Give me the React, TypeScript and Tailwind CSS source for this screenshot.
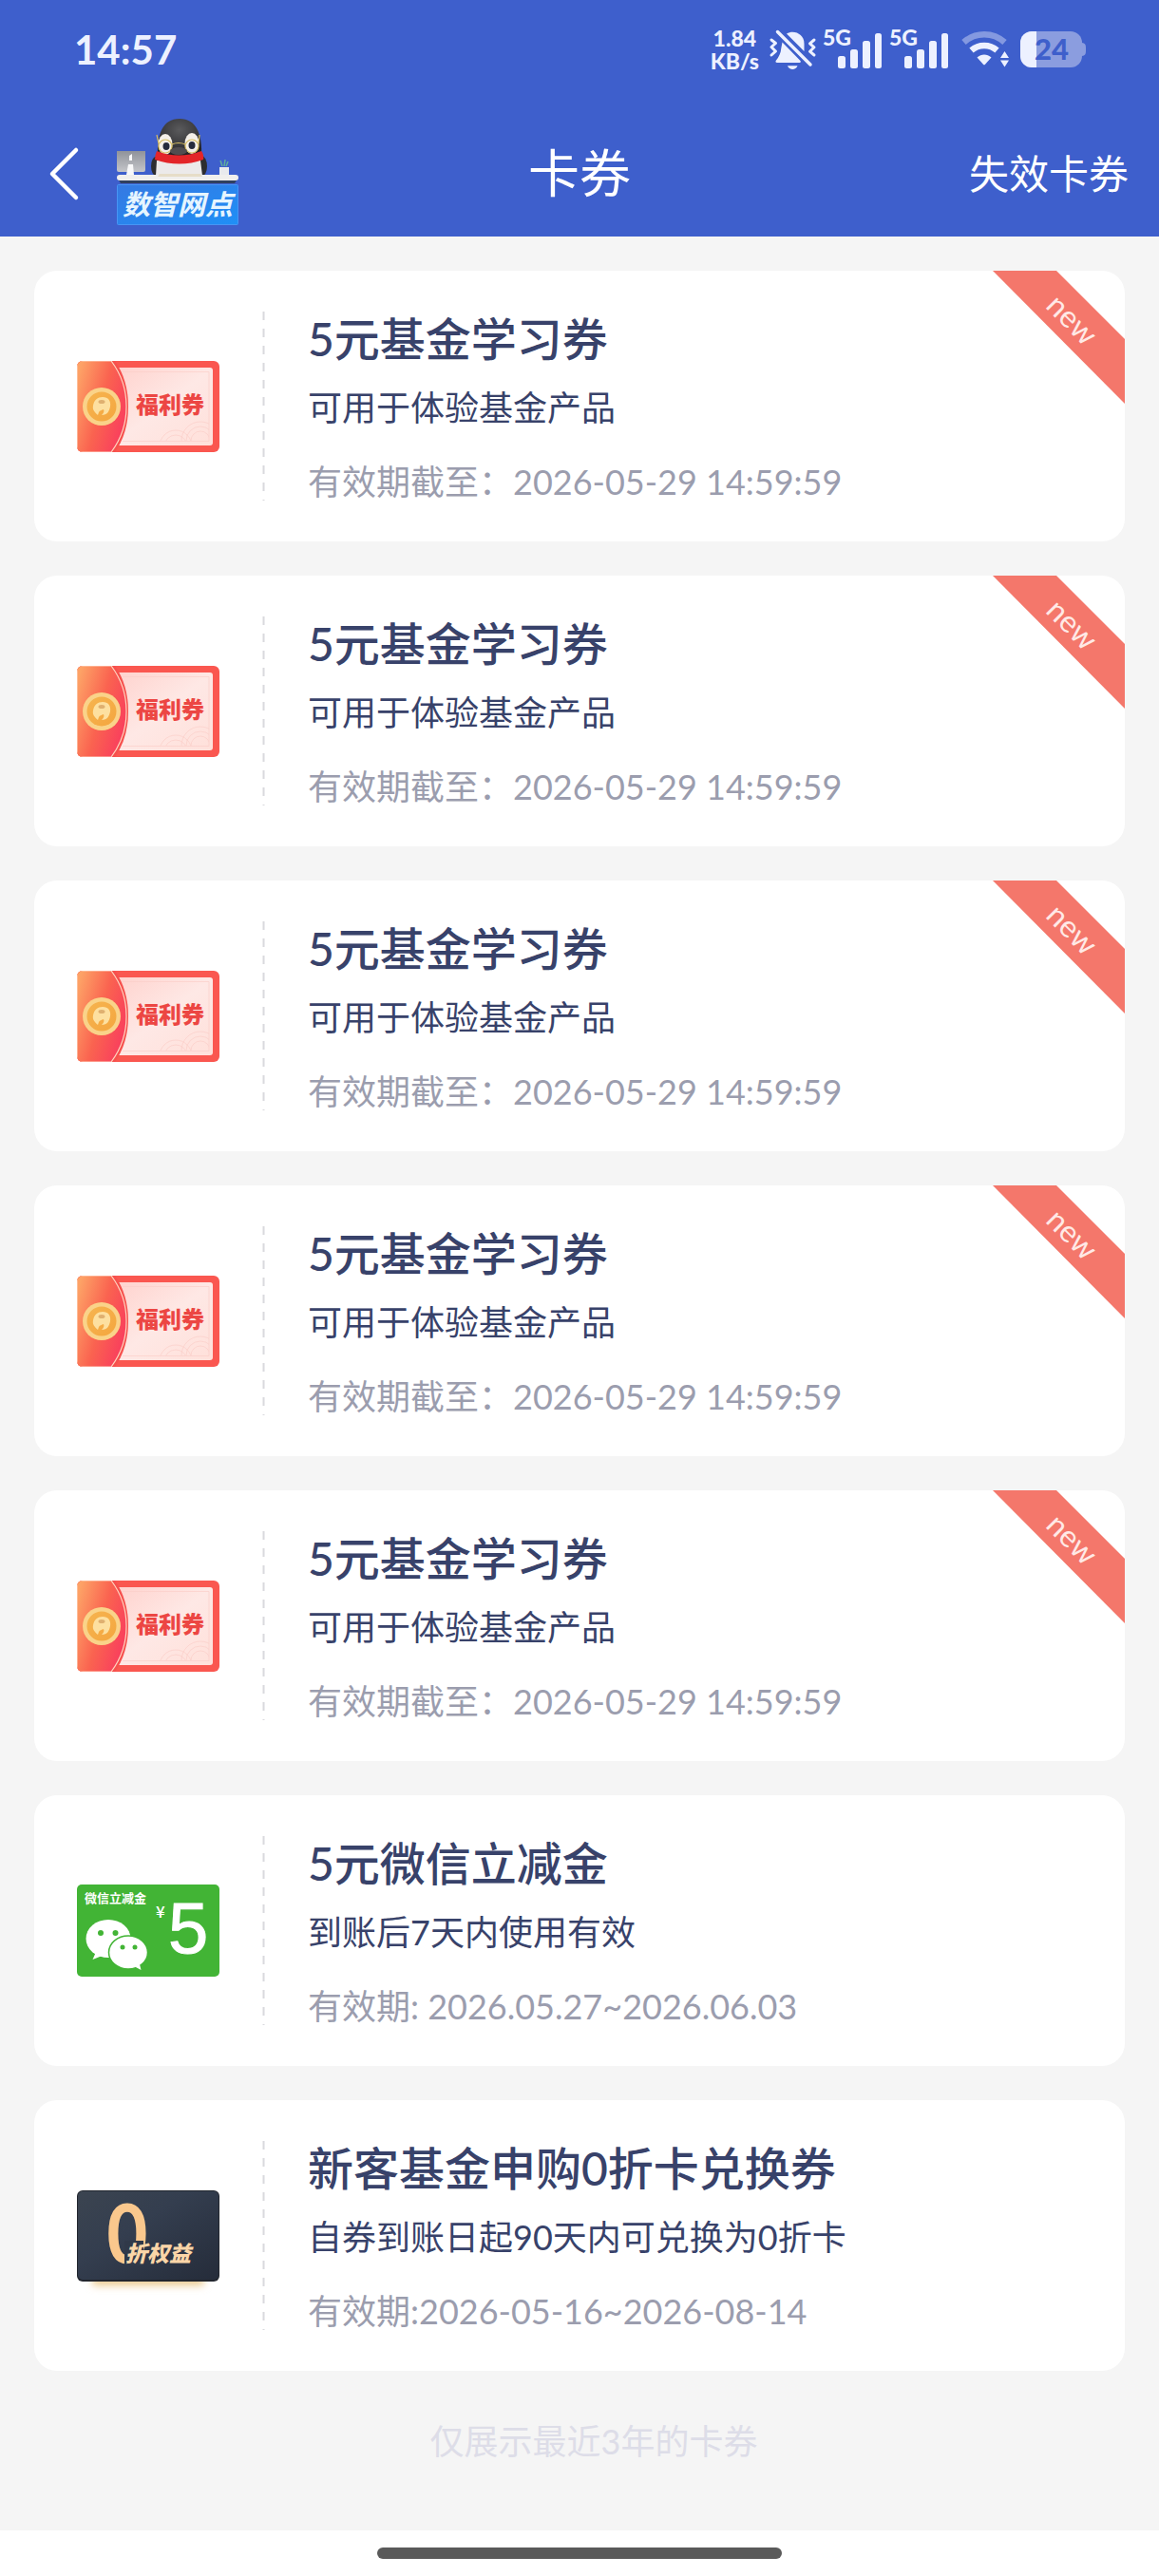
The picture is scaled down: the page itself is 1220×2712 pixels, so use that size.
type CouponKind = "welfare" | "wechat" | "zero";

interface Coupon {
  id: number;
  kind: CouponKind;
  title: string;
  description: string;
  validity: string;
  isNew?: boolean;
}

const fundCoupons: Coupon[] = [1, 2, 3, 4, 5].map((id) => ({
  id,
  kind: "welfare",
  title: "5元基金学习券",
  description: "可用于体验基金产品",
  validity: "有效期截至：2026-05-29 14:59:59",
  isNew: true,
}));

const coupons: Coupon[] = [
  ...fundCoupons,
  {
    id: 6,
    kind: "wechat",
    title: "5元微信立减金",
    description: "到账后7天内使用有效",
    validity: "有效期: 2026.05.27~2026.06.03",
  },
  {
    id: 7,
    kind: "zero",
    title: "新客基金申购0折卡兑换券",
    description: "自券到账日起90天内可兑换为0折卡",
    validity: "有效期:2026-05-16~2026-08-14",
  },
];

function MutedBellIcon() {
  return (
    <svg width="50" height="44" viewBox="0 0 50 44" fill="none" className="overflow-visible" aria-hidden="true">
      <path d="M20 5.5C28 1 38.500 6 38.500 16v8z" fill="currentColor" />
      <path d="M15.500 14.500 34.500 34c.8.900.3 2-.8 2H10c-1.500 0-2-1.300-1.200-2.300 3-3.500 5.200-8 5.500-13z" fill="currentColor" />
      <path d="M21 39.200h10.500c-1 2.600-3 3.800-5.200 3.800s-4.300-1.200-5.300-3.800z" fill="currentColor" />
      <path d="m10.500 3.500 34.500 34.500" stroke="currentColor" strokeWidth="3.500" strokeLinecap="round" />
      <path
        d="m4 12 4.500 3.500L4 19.500 8.500 24 4 28M49 12l-4.500 3.800 4.500 4-4.500 4.400L49 28"
        stroke="currentColor"
        strokeWidth="3"
        strokeLinejoin="round"
        strokeLinecap="round"
      />
    </svg>
  );
}

function SignalIcon() {
  return (
    <svg width="61" height="42" viewBox="0 0 61 42" fill="currentColor" className="overflow-visible" aria-hidden="true">
      <text x="-1" y="17" className="font-['Lato',sans-serif] text-[23px] font-black">
        5G
      </text>
      <rect x="15" y="28" width="8" height="13" rx="2.500" />
      <rect x="28" y="21" width="8" height="20" rx="2.500" />
      <rect x="41" y="12" width="8" height="29" rx="2.500" />
      <rect x="54" y="4" width="7" height="37" rx="2.500" />
    </svg>
  );
}

function WifiIcon() {
  return (
    <svg width="58" height="40" viewBox="0 0 58 40" fill="none" aria-hidden="true">
      <path d="M7.500 12.500a32 32 0 0 1 43 0" stroke="currentColor" strokeOpacity=".4" strokeWidth="6.500" />
      <path d="M15.500 21a20.500 20.500 0 0 1 27 0" stroke="currentColor" strokeWidth="6.500" />
      <path d="M21.500 28.500c4.500-4 10.500-4 15 0L30 35.700a1.400 1.400 0 0 1-2 0z" fill="currentColor" />
      <path d="M50.500 22 55 29h-9zM50.500 38.500 46 31.500h9z" fill="currentColor" />
    </svg>
  );
}

function BatteryIcon() {
  return (
    <svg width="69" height="38" viewBox="0 0 69 38" className="overflow-visible" aria-hidden="true">
      <defs>
        <clipPath id="battery-body">
          <rect width="65" height="38" rx="12" />
        </clipPath>
      </defs>
      <g clipPath="url(#battery-body)">
        <rect width="65" height="38" fill="#8b9ddf" />
        <rect width="17" height="38" fill="#edf1ff" />
      </g>
      <path d="M65 12c3 .500 4 2 4 5v4c0 3-1 4.500-4 5z" fill="#8b9ddf" />
      <text x="15" y="30" fill="#3e5fcb" className="font-['Lato',sans-serif] text-[31px] font-black">
        24
      </text>
    </svg>
  );
}

function StatusBar() {
  return (
    <div className="flex h-[104px] items-center justify-between pl-[78px] pr-[77px] font-['Lato',sans-serif] font-bold text-[#edf1ff]">
      <span className="text-[42px] leading-none">14:57</span>
      <div className="flex items-center gap-[9px]">
        <div className="text-center text-[23px] font-black leading-6">
          <div>1.84</div>
          <div>KB/s</div>
        </div>
        <MutedBellIcon />
        <SignalIcon />
        <SignalIcon />
        <WifiIcon />
        <BatteryIcon />
      </div>
    </div>
  );
}

function BranchLogo() {
  return (
    <svg width="130" height="118" viewBox="0 0 130 118" role="img" aria-label="数智网点">
      <defs>
        <radialGradient id="penguin-head" cx=".5" cy=".3" r=".7">
          <stop offset="0" stopColor="#5a5a5c" />
          <stop offset="1" stopColor="#242427" />
        </radialGradient>
        <linearGradient id="logo-screen" x1="0" y1="0" x2="0" y2="1">
          <stop offset="0" stopColor="#90939a" />
          <stop offset="1" stopColor="#c4c5c9" />
        </linearGradient>
        <linearGradient id="logo-sign" x1="0" y1="0" x2="1" y2="1">
          <stop offset="0" stopColor="#3579e2" />
          <stop offset="1" stopColor="#1f8ff6" />
        </linearGradient>
      </defs>
      <ellipse cx="42" cy="51" rx="5" ry="10" fill="#2d2d30" />
      <ellipse cx="90" cy="51" rx="6" ry="11" fill="#2d2d30" />
      <path d="M43 45h46l2 16H42z" fill="#eceaea" />
      <path d="M44 40C43 18 49 1 67 1s24 17 23 39z" fill="url(#penguin-head)" />
      <ellipse cx="52" cy="28" rx="7.500" ry="11" fill="#f4efe8" />
      <ellipse cx="80" cy="27" rx="7.500" ry="11" fill="#f4efe8" />
      <ellipse cx="53" cy="30" rx="3.500" ry="4" fill="#252b3d" />
      <ellipse cx="80" cy="29" rx="3.500" ry="4" fill="#252b3d" />
      <g fill="none" stroke="#d6bd62" strokeWidth="1.200">
        <circle cx="52" cy="30" r="7" />
        <circle cx="80" cy="30" r="7" />
        <path d="M59 28q7-3 14 0M45 27l-2-9M87 27l1-9" />
      </g>
      <ellipse cx="66" cy="35" rx="9" ry="4" fill="#514d50" />
      <path d="M43 35q23 9 47 0 3 4 2 9-25 9-51 0 0-5 2-9z" fill="#e32529" />
      <path d="M1 35h30v20q0 2-2 2H3q-2 0-2-2z" fill="url(#logo-screen)" />
      <path d="M13 49h5l1 11h-8zM14 40l3-2v7h-3z" fill="#f8f8f9" />
      <path d="m112 51-2-6M114 51l1-7M116 51l2-5" stroke="#5fae9d" strokeWidth="1.500" />
      <path d="M109 52h10v8h-10z" fill="#e9eaed" />
      <path d="M2 64h126l-3 5H5z" fill="#30405f" />
      <rect x="1" y="60" width="128" height="6" rx="3" fill="#f0efed" />
      <path d="M46 59h43l2 3H44z" fill="#e6ddc8" />
      <rect x="1.500" y="70.500" width="127" height="42" rx="1" fill="url(#logo-sign)" stroke="#4795f4" />
      <text
        x="65"
        y="102"
        textAnchor="middle"
        fill="#e6f5ff"
        className="font-['Noto_Sans_CJK_SC',sans-serif] text-[29px] font-bold italic"
      >
        数智网点
      </text>
    </svg>
  );
}

function Header() {
  return (
    <header className="bg-[#3e5fcc] text-white">
      <StatusBar />
      <nav className="grid h-[145px] grid-cols-3 items-center px-8 pt-3">
        <div className="flex items-center gap-9 pl-[18px]">
          <button type="button" aria-label="返回">
            <svg width="36" height="60" viewBox="0 0 36 60" fill="none" aria-hidden="true">
              <path d="M30 5 5 30l25 25" stroke="currentColor" strokeWidth="4.500" strokeLinecap="round" strokeLinejoin="round" />
            </svg>
          </button>
          <BranchLogo />
        </div>
        <h1 className="text-center text-[54px] leading-none">卡券</h1>
        <a href="#expired" className="text-right text-[42px] leading-none">
          失效卡券
        </a>
      </nav>
    </header>
  );
}

function WelfareArt() {
  return (
    <svg width="150" height="96" viewBox="0 0 150 96" aria-hidden="true">
      <defs>
        <clipPath id="welfare-clip">
          <rect width="150" height="96" rx="6" />
        </clipPath>
        <clipPath id="welfare-rings">
          <rect x="48" y="12" width="91" height="72" />
        </clipPath>
        <linearGradient id="welfare-left" x1="0" y1=".2" x2="1" y2=".7">
          <stop offset="0" stopColor="#fda266" />
          <stop offset=".5" stopColor="#fa6350" />
          <stop offset="1" stopColor="#f93c5e" />
        </linearGradient>
        <linearGradient id="welfare-panel" x1="0" y1="0" x2="1" y2="1">
          <stop offset="0" stopColor="#ffd2cd" />
          <stop offset=".5" stopColor="#fee8e5" />
          <stop offset="1" stopColor="#ffe0da" />
        </linearGradient>
        <linearGradient id="welfare-coin" x1="0" y1="0" x2="1" y2="1">
          <stop offset="0" stopColor="#f6b44f" />
          <stop offset="1" stopColor="#f4a63f" />
        </linearGradient>
      </defs>
      <g clipPath="url(#welfare-clip)">
        <rect width="150" height="96" fill="#fa5750" />
        <rect x="38" y="7" width="105" height="82" rx="3" fill="url(#welfare-panel)" />
        <path d="M48 11.500h91v73H48" fill="none" stroke="#fbcfc8" strokeWidth=".7" />
        <g fill="none" stroke="#fbcfc8" strokeWidth=".7" clipPath="url(#welfare-rings)">
          <circle cx="130" cy="84" r="10" />
          <circle cx="130" cy="84" r="15" />
          <circle cx="130" cy="84" r="20" />
          <circle cx="104" cy="90" r="12" />
          <circle cx="104" cy="90" r="17" />
        </g>
        <path d="M0 0h40q14 20 14 48T40 96H0z" fill="#f6504d" />
        <path d="M0 0h36q16 21 16 48T36 96H0z" fill="url(#welfare-left)" stroke="#ffd3bd" strokeWidth="1.200" />
      </g>
      <circle cx="26" cy="48" r="20" fill="#fad389" />
      <circle cx="26" cy="48" r="15.500" fill="url(#welfare-coin)" />
      <path d="M17 47c1-6 5-9 10-9 6 0 9 4 8 10-1 5-3 9-9 9 2-2 3-4 2-6-2 1-4 1-5 3l-1 3c-3-3-6-5-5-10z" fill="#fde0a0" />
      <ellipse cx="26" cy="43" rx="3.500" ry="2" fill="#dfb070" />
      <text x="98" y="55" textAnchor="middle" fill="#ec4643" className="font-['Noto_Sans_CJK_SC',sans-serif] text-[24px] font-black">
        福利券
      </text>
    </svg>
  );
}

function WechatArt() {
  return (
    <svg width="150" height="97" viewBox="0 0 150 97" aria-hidden="true">
      <rect width="150" height="97" rx="5" fill="#42b435" />
      <g fill="#fff">
        <text x="8" y="19" className="font-['Noto_Sans_CJK_SC',sans-serif] text-[13px] font-bold">
          微信立减金
        </text>
        <text x="83" y="35" className="font-['Noto_Sans_CJK_SC',sans-serif] text-[17px] font-medium">
          ¥
        </text>
        <text x="96" y="72" stroke="#fff" className="font-['Liberation_Sans',sans-serif] text-[76px]">
          5
        </text>
        <ellipse cx="33" cy="57" rx="23.500" ry="20" />
        <path d="m20 71-3.500 8 10-4z" />
        <ellipse cx="54" cy="71.500" rx="20.500" ry="17.500" stroke="#42b435" strokeWidth="1.500" />
        <path d="m60 86 7.500 4-2-8z" />
      </g>
      <g fill="#42b435">
        <circle cx="25" cy="51" r="3" />
        <circle cx="40.500" cy="51" r="3" />
        <circle cx="48" cy="66" r="2.500" />
        <circle cx="61" cy="66" r="2.500" />
      </g>
    </svg>
  );
}

function ZeroArt() {
  return (
    <svg width="150" height="96" viewBox="0 0 150 96" className="overflow-visible" aria-hidden="true">
      <defs>
        <linearGradient id="zero-bg" x1="0" y1="0" x2="1" y2="1">
          <stop offset="0" stopColor="#3b4450" />
          <stop offset=".4" stopColor="#343e4f" />
          <stop offset="1" stopColor="#252c3a" />
        </linearGradient>
        <filter id="zero-glow" x="-20%" y="-100%" width="140%" height="300%">
          <feGaussianBlur stdDeviation="4" />
        </filter>
      </defs>
      <rect x="16" y="88" width="118" height="12" rx="4" fill="#eac98c" filter="url(#zero-glow)" />
      <rect width="150" height="96" rx="6" fill="#22262e" />
      <rect x="1" y="1" width="148" height="93" rx="5" fill="url(#zero-bg)" />
      <text
        x="30"
        y="75"
        fill="#fac88d"
        stroke="#fac88d"
        strokeWidth="3"
        className="font-['Liberation_Sans_Narrow','DejaVu_Sans_Condensed',sans-serif] text-[80px]"
      >
        0
      </text>
      <path d="M50 53h20v26H50z" fill="#303949" />
      <text x="51" y="75" fill="#fbd6a8" className="font-['Noto_Sans_CJK_SC',sans-serif] text-[23px] font-black italic">
        折权益
      </text>
    </svg>
  );
}

const artwork = {
  welfare: WelfareArt,
  wechat: WechatArt,
  zero: ZeroArt,
};

function NewRibbon() {
  return (
    <svg width="139" height="140" viewBox="0 0 139 140" className="absolute right-0 top-0">
      <path d="M0 0h67l72 72v68z" fill="#f4776b" />
      <text
        x="82"
        y="62"
        textAnchor="middle"
        transform="rotate(45 82 53)"
        fill="#ffe9e6"
        className="font-['Lato',sans-serif] text-[32px]"
      >
        new
      </text>
    </svg>
  );
}

function CouponCard({ coupon }: { coupon: Coupon }) {
  const Art = artwork[coupon.kind];

  return (
    <li className="relative flex items-center gap-[45px] rounded-3xl bg-white px-[45px]">
      <Art />
      <svg width="3" height="199" className="shrink-0" aria-hidden="true">
        <path d="M1.500 0v199" stroke="#d9d9dd" strokeWidth="2" strokeDasharray="9 9" />
      </svg>
      <div className="pb-[27px] pt-9">
        <h2 className="text-[48px] font-medium leading-[72px] text-[#38426a]">{coupon.title}</h2>
        <p className="text-[36px] leading-[72px] text-[#38426a]">{coupon.description}</p>
        <p className="mt-1.5 text-[36px] leading-[72px] text-[#9b9dae]">{coupon.validity}</p>
      </div>
      {coupon.isNew && <NewRibbon />}
    </li>
  );
}

export default function App() {
  return (
    <div className="flex min-h-screen flex-col bg-white font-['Lato','Noto_Sans_CJK_SC',sans-serif]">
      <Header />
      <main className="flex-1 bg-[#f5f5f5] px-9 pt-9">
        <ul className="flex flex-col gap-9">
          {coupons.map((coupon) => (
            <CouponCard key={coupon.id} coupon={coupon} />
          ))}
        </ul>
        <p className="mt-[38px] pl-[30px] text-center text-[36px] leading-[72px] text-[#dddde8]">仅展示最近3年的卡券</p>
      </main>
      <footer className="flex h-12 items-center justify-center">
        <div className="h-3 w-[426px] rounded-full bg-[#5a5a5a]" />
      </footer>
    </div>
  );
}
